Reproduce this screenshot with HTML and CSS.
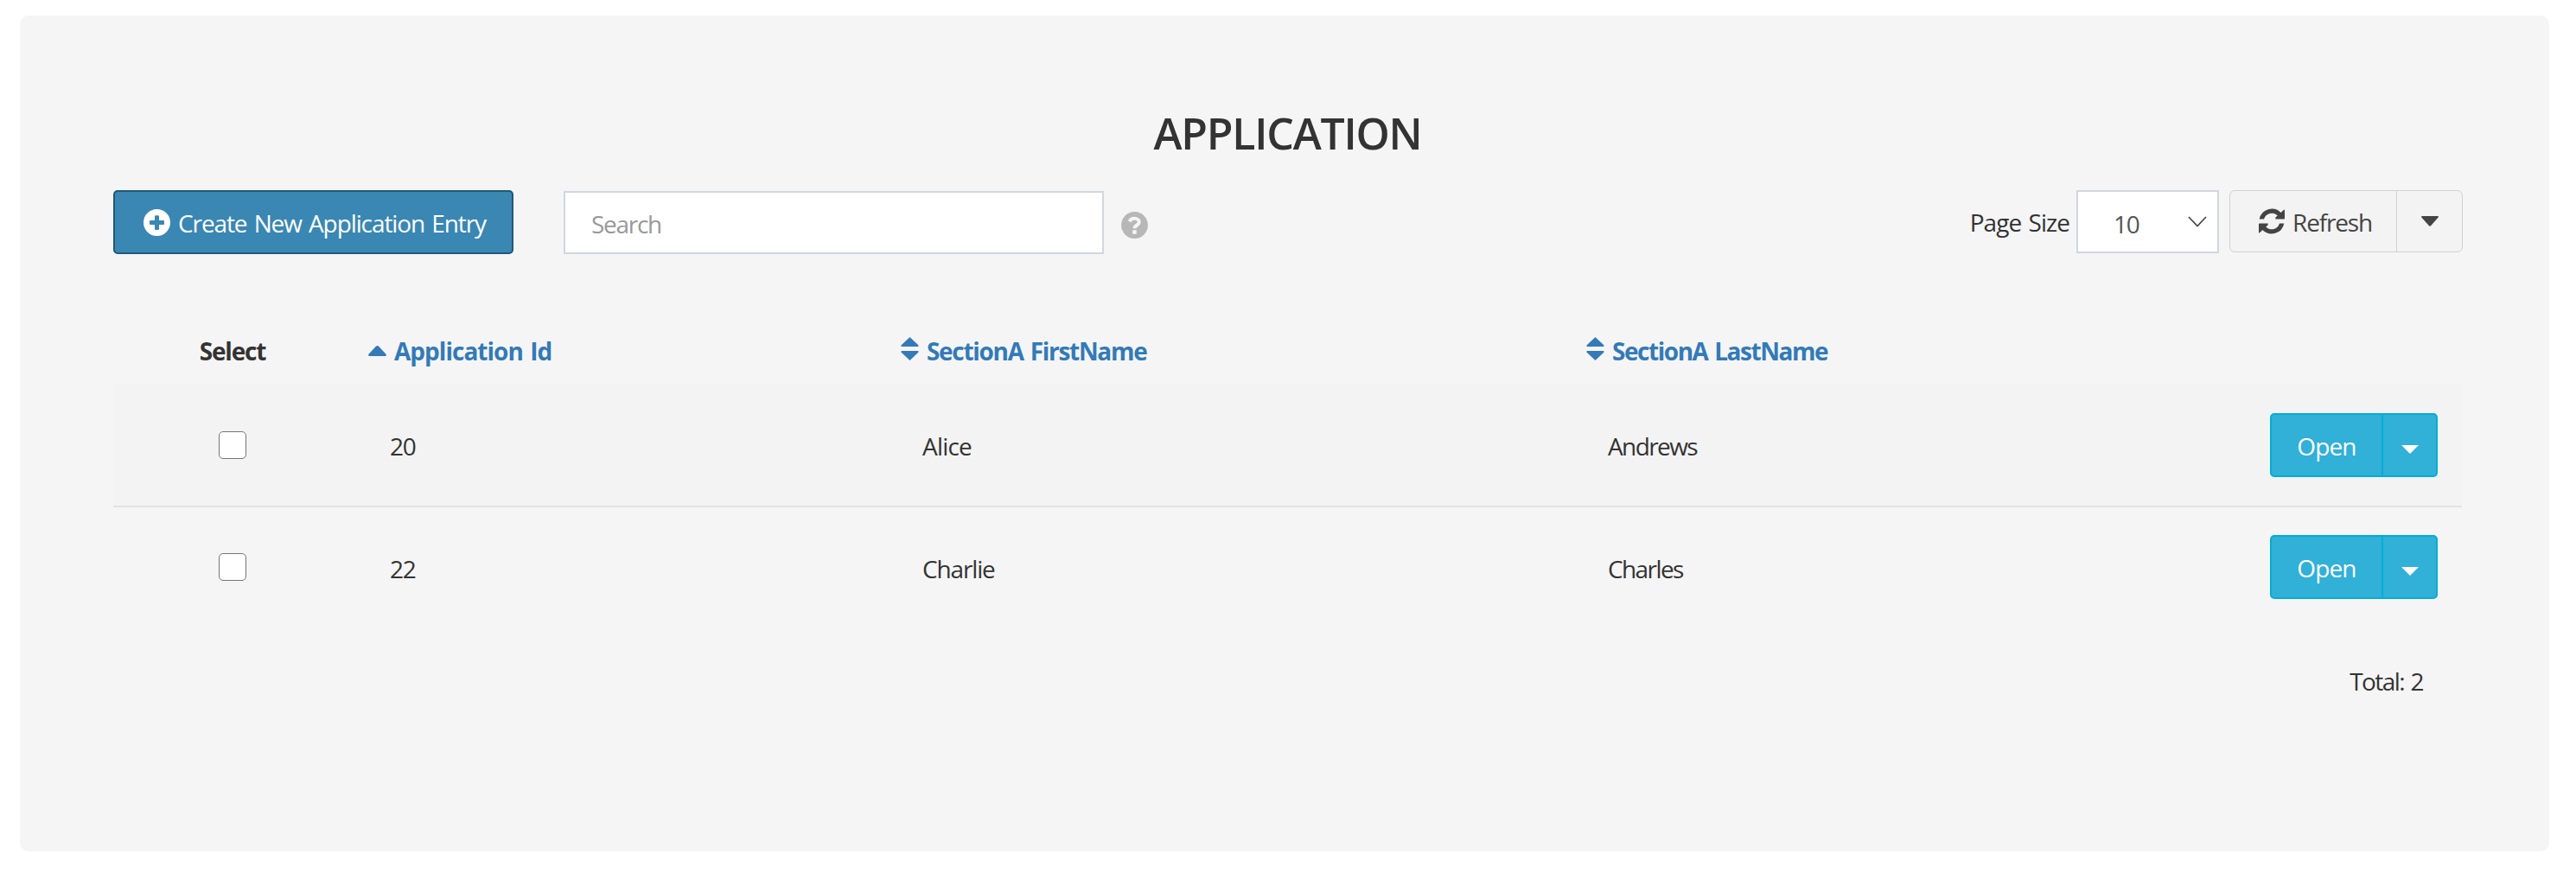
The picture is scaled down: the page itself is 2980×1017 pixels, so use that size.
FILE: index.html
```html
<!DOCTYPE html>
<html lang="en">
<head>
<meta charset="utf-8">
<title>Application</title>
<link rel="stylesheet" href="styles.css">
</head>
<body>
<main class="panel">
  <h1 class="title">APPLICATION</h1>

  <div class="toolbar">
    <button class="create">
      <svg class="icon" viewBox="0 0 31 31"><path fill="#fff" fill-rule="evenodd" d="M15.5 0a15.5 15.5 0 1 0 0 31 15.5 15.5 0 0 0 0-31zM14 7.2h3q1 0 1 1V13h5q1 0 1 1v3q0 1-1 1h-5v5q0 1-1 1h-3q-1 0-1-1v-5H8q-1 0-1-1v-3q0-1 1-1h5V8.2q0-1 1-1z"/></svg>
      <span>Create New Application Entry</span>
    </button>
    <input class="search" type="text" placeholder="Search">
    <svg class="help" viewBox="0 0 31 31"><circle cx="15.5" cy="15.5" r="15.4" fill="#b7b7b7"/><path d="M9.6 11.2C10.8 8.9 12.8 7.8 15.2 7.8c3.2 0 5.6 1.8 5.6 4.3 0 3.5-5.3 3.4-5.3 7.2" fill="none" stroke="#f5f5f5" stroke-width="4"/><path d="M13.2 21.2h4.6v4.5h-4.6z" fill="#f5f5f5"/></svg>

    <div class="controls">
      <span class="size-label">Page Size</span>
      <div class="size">
        <span>10</span>
        <svg class="chevron" viewBox="0 0 22 13"><path d="M1 1l10 10.5L21 1" fill="none" stroke="#444" stroke-width="1.6"/></svg>
      </div>
      <div class="refresh-group">
        <button class="refresh">
          <svg class="sync" viewBox="0 0 30 30"><path id="half" fill="#444" d="M.7 12.5A14.7 14.7 0 0 1 25.6 4.9L29 1.8q1-.6 1 .5V11.7q0 .8-.8.8H19.4V10.4L21.8 8.4A9.5 9.5 0 0 0 6 12.5z"/><use href="#half" transform="rotate(180 15 15)"/></svg>
          <span>Refresh</span>
        </button>
        <button class="refresh-menu">
          <svg class="down" viewBox="0 0 20 12"><path fill="#444" d="M1 0h18q1.5.4.6 1.6L11 11.3q-1 .9-2 0L.4 1.6Q-.5.4 1 0z"/></svg>
        </button>
      </div>
    </div>
  </div>

  <section class="grid">
    <div class="row head">
      <div class="cell center"><span class="h-select">Select</span></div>
      <div class="cell sort id"><svg class="asc" viewBox="0 0 21 12"><path d="M10.5 0q.8 0 1.4.6l8.6 9.2q1 1.8-.8 2.2H1.3Q-.5 11.600 .5 9.800L9.100.6Q9.700 0 10.500 0z"/></svg><span>Application Id</span></div>
      <div class="cell sort first"><svg class="both" viewBox="0 0 21 27"><path d="M10.500 0L20.300 9.300q.8 1.700-.6 1.700H1.300Q-.1 11 .7 9.300zM10.500 27L20.300 17.700q.8-1.700-.6-1.700H1.300Q-.1 16 .7 17.700z"/></svg><span>SectionA FirstName</span></div>
      <div class="cell sort last"><svg class="both" viewBox="0 0 21 27"><path d="M10.500 0L20.300 9.300q.8 1.700-.6 1.700H1.300Q-.1 11 .7 9.300zM10.500 27L20.300 17.700q.8-1.700-.6-1.700H1.300Q-.1 16 .7 17.700z"/></svg><span>SectionA LastName</span></div>
      <div class="cell"></div>
    </div>
    <div class="row striped">
      <div class="cell center"><input class="check" type="checkbox"></div>
      <div class="cell value">20</div>
      <div class="cell value"><span class="short">Alice</span></div>
      <div class="cell value"><span class="long">Andrews</span></div>
      <div class="cell actions"><button class="open">Open</button><button class="open-menu"><svg viewBox="0 0 20 10"><path fill="#fff" d="M0 0h20L10 10z"/></svg></button></div>
    </div>
    <div class="row">
      <div class="cell center"><input class="check" type="checkbox"></div>
      <div class="cell value">22</div>
      <div class="cell value"><span>Charlie</span></div>
      <div class="cell value"><span class="long">Charles</span></div>
      <div class="cell actions"><button class="open">Open</button><button class="open-menu"><svg viewBox="0 0 20 10"><path fill="#fff" d="M0 0h20L10 10z"/></svg></button></div>
    </div>
  </section>
  <div class="total">Total: 2</div>
</main>
</body>
</html>
```
FILE: styles.css
```css
* { box-sizing: border-box; }
body {
  margin: 0;
  background: #fff;
  color: #333;
  font: 28px/38px "Open Sans", "Noto Sans", sans-serif;
  letter-spacing: -1.15px;
}
button { font: inherit; letter-spacing: inherit; margin: 0; }
svg { display: block; flex: none; }
.panel {
  display: flex;
  flex-direction: column;
  width: 2926px;
  height: 967px;
  margin: 18px 0 0 23px;
  padding: 102px 101px 0 108px;
  background: #f5f5f5;
  border-radius: 10px;
}
.title {
  margin: 0 0 32px;
  font-size: 50px;
  line-height: 68px;
  font-weight: 600;
  letter-spacing: -1.26px;
  text-align: center;
}

.toolbar { display: flex; align-items: flex-start; height: 74px; }
.create {
  display: flex;
  align-items: center;
  width: 463px;
  height: 74px;
  padding: 0 0 0 33px;
  gap: 9px;
  border: 2px solid #1f5879;
  border-radius: 5px;
  background: #3a87b4;
  color: #fff;
  letter-spacing: -1.1px;
  word-spacing: 2px;
  white-space: nowrap;
}
.create span { padding-top: 2px; }
.icon { width: 31px; height: 31px; }
.search {
  width: 625px;
  height: 73px;
  margin: 1px 0 0 58px;
  padding: 2px 30px 0;
  border: 2px solid #d1d6e0;
  border-radius: 0;
  background: #fff;
  font: inherit;
  letter-spacing: -1.3px;
}
.search::placeholder { color: #999; opacity: 1; }
.help { width: 31px; height: 31px; margin: 25px 0 0 20px; }

.controls { display: flex; margin-left: auto; margin-right: -1px; }
.size-label { margin: 18px 8px 0 0; letter-spacing: -0.95px; word-spacing: 2px; }
.size {
  display: flex;
  width: 165px;
  height: 73px;
  padding: 18px 12px 0 41px;
  justify-content: space-between;
  border: 2px solid #d1d6e0;
  background: #fff;
  color: #555;
}
.chevron { width: 22px; height: 13px; margin-top: 10px; }
.refresh-group {
  display: flex;
  width: 270px;
  height: 72px;
  margin-left: 12px;
  border: 1px solid #d2d2d2;
  border-radius: 6px;
  background: #f3f3f3;
}
.refresh, .refresh-menu {
  display: flex;
  padding: 0;
  border: 0;
  background: none;
  color: #444;
}
.refresh { width: 192px; padding: 17px 0 0 33px; gap: 9px; }
.sync { width: 30px; height: 30px; margin-top: 3px; }
.refresh-menu { flex: 1; justify-content: center; border-left: 1px solid #d2d2d2; }
.down { width: 20px; height: 12px; margin-top: 29px; }

.grid { margin-top: 72px; }
.row {
  display: grid;
  grid-template-columns: 276px 616px 793px 1fr 236px;
  height: 138px;
  align-items: center;
}
.head { height: 78px; align-items: start; font-weight: 700; }
.striped { height: 143px; background: #f3f3f3; border-bottom: 2px solid #e2e2e2; }
.cell { display: flex; }
.center { justify-content: center; }
.h-select { margin: 21px 0 0 0; }
.sort { padding-left: 19px; gap: 9px; color: #337ab7; fill: #337ab7; letter-spacing: -1.3px; word-spacing: 2px; }
.sort span { padding-top: 21px; }
.id { letter-spacing: -0.97px; }
.last { letter-spacing: -1.46px; }
.asc { width: 21px; height: 12px; margin-top: 34px; }
.both { width: 21px; height: 27px; margin-top: 24px; }
.value { padding: 3px 0 0 44px; }
.short { letter-spacing: -0.81px; }
.long { letter-spacing: -1.6px; }
.check {
  appearance: none;
  width: 32px;
  height: 32px;
  margin: 0;
  border: 1.5px solid #767676;
  border-radius: 5px;
  background: #fff;
}
.striped .check { margin-top: 1px; }
.open, .open-menu {
  height: 74px;
  padding: 0;
  border: 2px solid #02acd8;
  background: #31b0d8;
  color: #fff;
}
.open { width: 131px; padding-top: 2px; border-radius: 5px 0 0 5px; letter-spacing: -0.88px; }
.open-menu {
  display: flex;
  justify-content: center;
  align-items: center;
  width: 65px;
  margin-left: -2px;
  padding-top: 10px;
  border-radius: 0 5px 5px 0;
}
.open-menu svg { width: 20px; height: 10px; }
.actions { padding-left: 14px; }
.total { margin: 44px 45px 0 0; text-align: right; letter-spacing: -1.6px; word-spacing: 2px; }
```
